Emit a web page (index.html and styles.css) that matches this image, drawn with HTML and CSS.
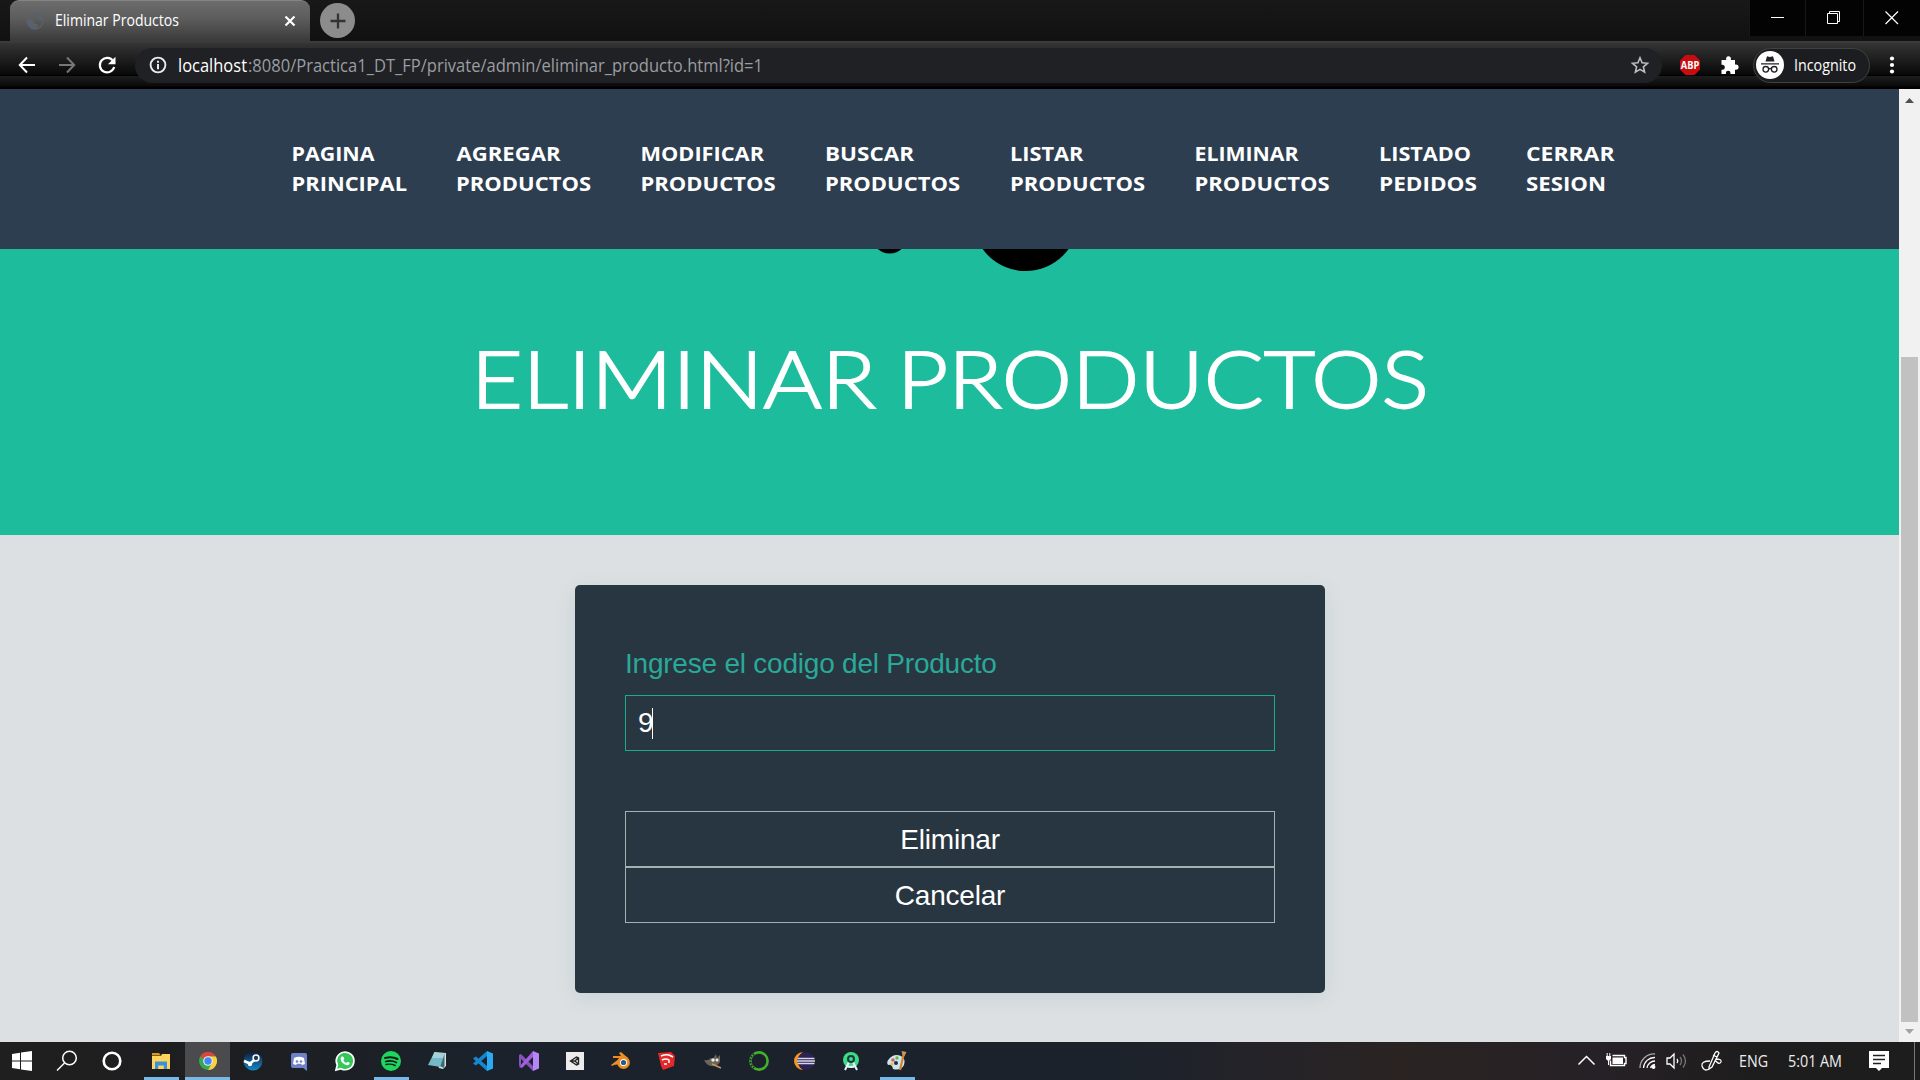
FILE: index.html
```html
<!DOCTYPE html>
<html lang="es">
<head>
<meta charset="utf-8">
<title>Eliminar Productos</title>
<link rel="stylesheet" href="styles.css">
</head>
<body>
<div class="tabstrip">
  <div class="tab">
    <svg class="globe" width="18" height="18" viewBox="0 0 18 18"><circle cx="9" cy="9" r="7.800" fill="none" stroke="#59616a" stroke-width="1.700"/><path d="M2 6c3 2 6 1 6 4s4 1 4 3-2 3.500-4 3.500C4 16 1 12 2 6zM10 1c-2 2-1 3 1 4s0 3 2 3 3 1 4-1c-1-4-4-6-7-6z" fill="#59616a"/></svg>
    <svg class="tab-title" width="130" height="24"><text x="0" y="17" textLength="124" lengthAdjust="spacingAndGlyphs">Eliminar Productos</text></svg>
    <svg class="tab-close" width="12" height="12" viewBox="0 0 12 12"><path d="M1.500 1.500l9 9M10.500 1.500l-9 9" stroke="#fff" stroke-width="2.200"/></svg>
  </div>
  <div class="new-tab"><svg width="16" height="16" viewBox="0 0 16 16"><path d="M8 .5v15M.5 8h15" stroke="#333" stroke-width="2.300"/></svg></div>
  <div class="window-buttons">
    <div class="wb"><svg width="14" height="14"><path d="M0 6.500h13" stroke="#fff"/></svg></div>
    <div class="wb"><svg width="14" height="14"><path d="M.5 2.500h10v10h-10zM2.500 2.500v-2h10v10h-2" fill="none" stroke="#fff"/></svg></div>
    <div class="wb"><svg width="14" height="14"><path d="M.5.5l12.500 12.500M13 .5l-12.500 12.500" stroke="#fff" stroke-width="1.200"/></svg></div>
  </div>
</div>
<div class="toolbar">
  <svg class="nav-icon" width="18" height="18" viewBox="0 0 18 18"><path d="M17 9H2M9 1.500L1.800 9 9 16.500" fill="none" stroke="#fff" stroke-width="2"/></svg>
  <svg class="nav-icon" width="18" height="18" viewBox="0 0 18 18"><path d="M1 9h15M9 1.500L16.200 9 9 16.500" fill="none" stroke="#777" stroke-width="2"/></svg>
  <svg class="nav-icon" width="18" height="18" viewBox="0 0 18 18"><path d="M15.200 5A7.300 7.300 0 1 0 16.200 11" fill="none" stroke="#fff" stroke-width="2.200"/><path d="M17.500.7v7.600H9.900z" fill="#fff"/></svg>
  <div class="omnibox">
    <svg width="18" height="18" viewBox="0 0 18 18"><circle cx="9" cy="9" r="7.400" fill="none" stroke="#e8eaed" stroke-width="1.900"/><path d="M9 8v5.200M9 4.700v2" stroke="#e8eaed" stroke-width="2"/></svg>
    <svg class="url" width="600" height="30"><text x="0" y="21.500" fill="#fff" textLength="69" lengthAdjust="spacingAndGlyphs">localhost</text><text x="70" y="21.500" fill="#9a9da1" textLength="515" lengthAdjust="spacingAndGlyphs">:8080/Practica1_DT_FP/private/admin/eliminar_producto.html?id=1</text></svg>
    <svg class="star" width="18" height="18" viewBox="0 0 18 18"><path d="M9 1.800l2.100 5 5.400.5-4.100 3.600 1.200 5.300L9 13.400l-4.600 2.800 1.200-5.300L1.500 7.300l5.400-.5z" fill="none" stroke="#bdbdbd" stroke-width="1.600"/></svg>
  </div>
  <svg class="abp" width="22" height="22" viewBox="0 0 22 22"><path d="M6.500 1h9L21 6.500v9L15.500 21h-9L1 15.500v-9z" fill="#c70d10"/><text x="1.800" y="14.700" textLength="18.500" lengthAdjust="spacingAndGlyphs">ABP</text></svg>
  <svg class="puzzle" width="20" height="20" viewBox="0 0 20 20"><path d="M1.500 5h4.800a2.500 2.500 0 1 1 4.400 0H15v4.500h1a2.600 2.600 0 0 1 0 5.200h-1V19h-4.500v-1a2.300 2.300 0 0 0-4.600 0v1H1.500v-4.300h.8a2.500 2.500 0 0 0 0-5h-.8z" fill="#fff"/></svg>
  <div class="incognito">
    <svg width="28" height="28" viewBox="0 0 28 28"><circle cx="14" cy="14" r="14" fill="#fff"/><path d="M9.500 10.500L11 5.300l3 .8 3-.8 1.500 5.200zM5 12.200h18v1.400H5z" fill="#202124"/><g fill="none" stroke="#202124" stroke-width="1.300"><circle cx="9.800" cy="18.300" r="2.800"/><circle cx="18.200" cy="18.300" r="2.800"/><path d="M12.600 18q1.400-1 2.800 0"/></g></svg>
    <svg class="inc-label" width="66" height="26"><text x="0" y="18.500" textLength="62" lengthAdjust="spacingAndGlyphs">Incognito</text></svg>
  </div>
  <svg class="dots" width="6" height="18" fill="#fff"><circle cx="3" cy="2.500" r="2.100"/><circle cx="3" cy="9" r="2.100"/><circle cx="3" cy="15.500" r="2.100"/></svg>
</div>
<div class="viewport">
  <main class="page">
    <nav class="menu">
      <svg width="115" height="60"><text x=".5" y="22" textLength="83" lengthAdjust="spacingAndGlyphs">PAGINA</text><text x=".5" y="52" textLength="115.500" lengthAdjust="spacingAndGlyphs">PRINCIPAL</text></svg>
      <svg width="134.500" height="60"><text x=".5" y="22" textLength="104" lengthAdjust="spacingAndGlyphs">AGREGAR</text><text x="0" y="52" textLength="135" lengthAdjust="spacingAndGlyphs">PRODUCTOS</text></svg>
      <svg width="134.500" height="60"><text x="-.5" y="22" textLength="123.500" lengthAdjust="spacingAndGlyphs">MODIFICAR</text><text x="-.5" y="52" textLength="135" lengthAdjust="spacingAndGlyphs">PRODUCTOS</text></svg>
      <svg width="134.500" height="60"><text x="0" y="22" textLength="89" lengthAdjust="spacingAndGlyphs">BUSCAR</text><text x="0" y="52" textLength="135" lengthAdjust="spacingAndGlyphs">PRODUCTOS</text></svg>
      <svg width="134.500" height="60"><text x="0" y="22" textLength="73.500" lengthAdjust="spacingAndGlyphs">LISTAR</text><text x="0" y="52" textLength="135" lengthAdjust="spacingAndGlyphs">PRODUCTOS</text></svg>
      <svg width="134.500" height="60"><text x=".5" y="22" textLength="104" lengthAdjust="spacingAndGlyphs">ELIMINAR</text><text x=".5" y="52" textLength="135" lengthAdjust="spacingAndGlyphs">PRODUCTOS</text></svg>
      <svg width="97" height="60"><text x="0" y="22" textLength="92" lengthAdjust="spacingAndGlyphs">LISTADO</text><text x="0" y="52" textLength="98" lengthAdjust="spacingAndGlyphs">PEDIDOS</text></svg>
      <svg width="90" height="60"><text x="0" y="22" textLength="88.500" lengthAdjust="spacingAndGlyphs">CERRAR</text><text x="0" y="52" textLength="80" lengthAdjust="spacingAndGlyphs">SESION</text></svg>
    </nav>
    <header class="hero">
      <svg class="logo" width="250" height="24" viewBox="850 249 250 24"><circle cx="889.700" cy="235.500" r="18"/><circle cx="1025.600" cy="218" r="53"/></svg>
      <svg class="title" width="960" height="80"><text x="-3" y="64.500" textLength="405" lengthAdjust="spacingAndGlyphs">ELIMINAR</text><text x="423" y="64.500" textLength="532" lengthAdjust="spacingAndGlyphs">PRODUCTOS</text></svg>
    </header>
    <section class="content">
      <form class="card">
        <label class="label">Ingrese el codigo del Producto</label>
        <div class="field">9<span class="caret"></span></div>
        <div class="btn">Eliminar</div>
        <div class="btn">Cancelar</div>
      </form>
    </section>
  </main>
  <div class="scrollbar">
    <svg width="21" height="21"><path d="M6 14l4.500-5 4.500 5z" fill="#505050"/></svg>
    <div class="thumb"></div>
    <svg width="21" height="20"><path d="M6 7h9l-4.500 5z" fill="#a3a3a3"/></svg>
  </div>
</div>
<footer class="taskbar">
  <div class="slot"><svg width="20" height="20" fill="#fff"><path d="M0 3l8-1.200V9.500H0zM9 1.600L20 0v9.500H9zM0 10.500h8v7.700L0 17zM9 10.500h11V20L9 18.400z"/></svg></div>
  <div class="slot"><svg width="22" height="22" fill="none" stroke="#fff" stroke-width="1.500"><circle cx="13.500" cy="8" r="6.800"/><path d="M8.500 13L1 20.500"/></svg></div>
  <div class="slot"><svg width="22" height="22"><circle cx="11" cy="11" r="8.300" fill="none" stroke="#fff" stroke-width="2.600"/></svg></div>
  <div class="slot open wide-gap"><svg width="20" height="20"><path d="M1 2h7l2 2.500h-9z" fill="#d99a15"/><path d="M1 5h9l1-2h8v15H1z" fill="#ffd35c"/><path d="M4 18v-7.500h12V18h-3.200v-3.500H7.200V18z" fill="#3793db"/></svg></div>
  <div class="slot open active"><svg width="20" height="20" viewBox="0 0 20 20"><circle cx="10" cy="10" r="9" fill="#35a853"/><path d="M10 10L2.200 5.500A9 9 0 0 1 17.800 5.500H10z" fill="#dc4437"/><path d="M10 5.500h7.800A9 9 0 0 1 10 19l4-6.500z" fill="#fecd40"/><circle cx="10" cy="10" r="4.800" fill="#eee"/><circle cx="10" cy="10" r="3.700" fill="#4285f4"/></svg></div>
  <div class="slot"><svg width="20" height="20"><defs><linearGradient id="st" x2="0" y2="1"><stop stop-color="#101b3b"/><stop offset="1" stop-color="#1688c3"/></linearGradient></defs><circle cx="10" cy="10" r="9.500" fill="url(#st)"/><path d="M1 10l6 2.500 5-4" stroke="#fff" stroke-width="2.800" fill="none"/><circle cx="13" cy="7" r="2.900" fill="#20385a" stroke="#fff" stroke-width="1.500"/><circle cx="7" cy="13" r="2.200" fill="#fff"/></svg></div>
  <div class="slot"><svg width="18" height="20"><rect x="1" y="2" width="16" height="15" rx="2" fill="#7181c7"/><path d="M12 16h5v4z" fill="#7181c7"/><path d="M4 7q5-2.500 10 0l1 6-3 1-1-1.300H7L6 14l-3-1z" fill="#fff"/><circle cx="7" cy="10.500" r="1.300" fill="#7181c7"/><circle cx="11" cy="10.500" r="1.300" fill="#7181c7"/></svg></div>
  <div class="slot"><svg width="20" height="20"><path d="M1 19l1.300-5A8.800 8.800 0 1 1 6 17.700z" fill="#35c759" stroke="#fff" stroke-width="1.700"/><path d="M6.500 5.500l2 .2.800 2.200-1 1.300q1 2 3 2.800l1.200-1.300 2.200 1q0 2.500-2.700 2.500Q6 12.700 5.500 7.500z" fill="#fff"/></svg></div>
  <div class="slot open"><svg width="20" height="20"><circle cx="10" cy="10" r="10" fill="#1ed760"/><g fill="none" stroke="#121e18" stroke-linecap="round"><path d="M4 7q7-2 12.500 1" stroke-width="2"/><path d="M4.700 10.500q6-1.500 10.700 1" stroke-width="1.700"/><path d="M5 13.500q5-1 9.200 1" stroke-width="1.400"/></g></svg></div>
  <div class="slot"><svg width="20" height="20"><path d="M7 1l12 1v13l-3 3-4-1z" fill="#d8e2df"/><path d="M7 2h11l-4 14L1 14z" fill="#75b8c6"/><path d="M7 2h11l-1.500 5L5 7z" fill="#a3d2da"/><path d="M17.500 3l-4 12 3 2 1-2z" fill="#3c6979"/></svg></div>
  <div class="slot"><svg width="20" height="20"><path d="M14 0l6 2.500v15L14 20z" fill="#2aaaf2"/><path d="M14 0v5L3 14.500 0 12.500z M0 7.500l3-2L14 15v5z" fill="#1687cf"/></svg></div>
  <div class="slot"><svg width="20" height="20"><path d="M0 4l2-1 12 12v5L2 8v6l-2 1z" fill="#8454bd"/><path d="M0 16L14 0v6L3 17z" fill="#a05edd"/><path d="M14 0l6 2.500v15L14 20z" fill="#b584f5"/></svg></div>
  <div class="slot"><svg width="18" height="18"><path d="M0 0h18v18H0z" fill="#ececec"/><path d="M4.500 9l6-4 2 1v6l-2 1zM4.500 9H9M9 9l3-3M9 9l3 3" fill="none" stroke="#222" stroke-width="1.400"/></svg></div>
  <div class="slot"><svg width="20" height="20"><path d="M0 14l9-7H2V5h8L8 2l2-1 7 6-8 6-6 1-2 1z" fill="#ee8d20"/><circle cx="12.500" cy="11.500" r="5" fill="#fff" stroke="#ee8d20" stroke-width="2.800"/><circle cx="12.500" cy="11.500" r="2.600" fill="#225b96"/></svg></div>
  <div class="slot"><svg width="20" height="20"><path d="M1 2l13-1 4 4-1 10-11 4-2-4z" fill="#e32929"/><path d="M4 5q5-2 8-1l4 2M5 9q4-2 7 0v3M7 13h3" fill="none" stroke="#fff" stroke-width="1.500"/></svg></div>
  <div class="slot"><svg width="20" height="20"><path d="M1 9q4 1 7-2l2 1 3-5 1 4 3-3v7q-3 5-8 4Q4 15 1 9z" fill="#6d655b"/><circle cx="10" cy="9" r="1.700" fill="#eee"/><circle cx="14" cy="9" r="1.500" fill="#eee"/><path d="M9 13l9 4" stroke="#c29760" stroke-width="1.600"/></svg></div>
  <div class="slot"><svg width="20" height="20"><circle cx="10" cy="10" r="8.600" fill="none" stroke="#43b02a" stroke-width="2.600"/><path d="M5 3A8.600 8.600 0 0 0 5 17" fill="none" stroke="#1c242e" stroke-width="2" stroke-dasharray="1.500 1.500"/></svg></div>
  <div class="slot"><svg width="20" height="20"><path d="M8 1a9 9 0 0 0 0 18A11 11 0 0 1 8 1z" fill="#f7941e"/><circle cx="11" cy="10" r="8.700" fill="#2c2255"/><path d="M2.500 7.500h17M2 10h18M2.500 12.500h17" stroke="#d9d7e5" stroke-width="1.500"/></svg></div>
  <div class="slot"><svg width="20" height="20"><circle cx="10" cy="9" r="8" fill="#3ddc84"/><path d="M9 9L4 19M11 9l5 10M6 15q4 2 8 0" stroke="#e7f3fa" stroke-width="2" fill="none"/><circle cx="10" cy="8" r="3" fill="#3ddc84" stroke="#173b42" stroke-width="2"/></svg></div>
  <div class="slot open"><svg width="22" height="22"><path d="M3 9q5-6 12-3 5 3 3 9-3 6-11 4-1-5-5-4-2-3 1-6z" fill="#cbe5f1"/><circle cx="7" cy="10" r="1.800" fill="#e7584c"/><circle cx="11" cy="8" r="1.700" fill="#69b83e"/><circle cx="6" cy="14" r="1.500" fill="#f2b72c"/><circle cx="10" cy="13" r="2" fill="#19324c"/><path d="M18 3l-4 17" stroke="#d9822b" stroke-width="2.200"/><path d="M15.500 1l5 1-2 4-2-1z" fill="#c8975b"/></svg></div>
  <div class="tray">
    <svg width="17" height="20" fill="none" stroke="#fff" stroke-width="1.500"><path d="M.5 13.500l8-8 8 8"/></svg>
    <svg class="battery" width="21" height="20"><path d="M6.500 4.500h12v2h1.500v6h-1.500v2h-14v-5" fill="none" stroke="#fff" stroke-width="1.400"/><path d="M6.500 6.500h10.500v6.500H6.500zM0 5h5v3L3.500 9.500h-2L0 8z" fill="#fff"/><path d="M1.200 2v3M3.800 2v3M2.500 9v5" stroke="#fff"/></svg>
    <svg class="wifi" width="18" height="20" fill="none" stroke="#fff" stroke-width="1.300"><path d="M1 17A14 14 0 0 1 16 3" stroke="#aaa"/><path d="M4.500 17A11 11 0 0 1 16 6.500M8 17a8 8 0 0 1 8-7M11.500 17q1-3 4.500-3.500"/><circle cx="14.500" cy="16" r="1.300" fill="#fff"/></svg>
    <svg class="speaker" width="22" height="20" fill="none" stroke="#fff" stroke-width="1.300"><path d="M1 7h3l4-4v14l-4-4H1zM11 8q1.500 2 0 4"/><path d="M14 6q3 4 0 8M17 3.500q5 6.500 0 13" stroke="#777"/></svg>
    <svg class="pen" width="22" height="22" fill="none" stroke="#fff" stroke-width="1.300"><path d="M8 17L14 3q2-3 4 0L11 17l-3 2zM12 5l4 2M9 11q-9 0-8 5 2 6 7 3M15 9q6 0 5 3-2 3-5-1"/></svg>
    <svg class="lang" width="30" height="22"><text x="0" y="17" textLength="29" lengthAdjust="spacingAndGlyphs">ENG</text></svg>
    <svg class="clock" width="55" height="22"><text x="0" y="17" textLength="54" lengthAdjust="spacingAndGlyphs">5:01 AM</text></svg>
    <svg class="notice" width="20" height="20"><path d="M0 0h20v17h-7l-3 3-3-3H0z" fill="#fff"/><path d="M4 4.500h12M4 8.500h12M4 12.500h8" stroke="#222" stroke-width="1.300"/></svg>
    <div class="peek"></div>
  </div>
</footer>
</body>
</html>
```
FILE: styles.css
```css
* { box-sizing: border-box; }
body {
  margin: 0;
  width: 1920px;
  height: 1080px;
  overflow: hidden;
  display: flex;
  flex-direction: column;
  background: #000;
  font-family: "Liberation Sans", Arial, sans-serif;
}
svg { display: block; flex: none; overflow: visible; }
.tabstrip { height: 41px; display: flex; background: linear-gradient(#181818, #111); flex: none; }
.tab {
  width: 300px;
  margin-left: 10px;
  padding: 0 14px 0 16px;
  display: flex;
  align-items: center;
  background: linear-gradient(#6c6c6c, #5c5c5c 45%, #3a3a3a);
  border-radius: 9px 9px 0 0;
  border-top: 1px solid #858585;
}
.tab text, .incognito text { font: 15.500px "Open Sans", "Noto Sans", sans-serif; fill: #fff; }
.tab-title { margin-left: 11px; }
.tab-close { margin-left: auto; }
.new-tab {
  width: 35px;
  height: 35px;
  margin: 3px 0 0 10px;
  border-radius: 50%;
  background: #8c8c8c;
  display: flex;
  align-items: center;
  justify-content: center;
}
.window-buttons { margin-left: auto; display: flex; height: 36px; }
.wb {
  width: 58px;
  display: flex;
  align-items: center;
  justify-content: center;
  background: #030303;
  border-left: 1px solid #181818;
}
.wb:first-child { width: 56px; }
.wb:nth-child(2) { padding-right: 2px; }
.wb:last-child { width: 57px; padding-right: 1px; }
.toolbar {
  height: 48px;
  flex: none;
  display: flex;
  align-items: center;
  padding: 0 22px 0 18px;
  background: linear-gradient(#3f3f3f 0, #333 3px, #080808 34px, #000 34px, #000 35px, #1d1d1d 35px, #0a0a0a 45px, #000 46px);
}
.nav-icon { margin-right: 22px; }
.omnibox {
  width: 1527px;
  height: 35px;
  border-radius: 18px;
  background: #202124;
  display: flex;
  align-items: center;
  padding: 0 13px 0 14px;
  margin-left: -3px;
}
.url { margin-left: 11px; }
.url text { font: 18.500px "Open Sans", "Noto Sans", sans-serif; }
.star { margin-left: auto; }
.abp { margin-left: 17px; }
.abp text { font: bold 10px "Open Sans", sans-serif; fill: #fff; }
.puzzle { margin-left: 19px; }
.incognito {
  width: 117px;
  height: 35px;
  margin-left: 13px;
  border: 1px solid #414141;
  border-radius: 18px;
  background: #1c1d20;
  display: flex;
  align-items: center;
  padding-left: 2px;
}
.inc-label { margin-left: 10px; }
.dots { margin-left: 19px; }
.viewport { height: 953px; flex: none; display: flex; }
.page { width: 1899px; height: 953px; background: #dce0e3; overflow: hidden; }
.menu {
  height: 160px;
  padding: 50px 0 0 291px;
  display: flex;
  gap: 50px;
  background: #2d3e50;
}
.menu text {
  font: bold 19.500px "Open Sans", sans-serif;
  fill: #fff;
}
.hero {
  height: 286px;
  background: #1cbc9c;
  display: flex;
  flex-direction: column;
}
.logo { margin-left: 850px; overflow: hidden; }
.title { margin: 70px 0 0 474px; }
.title text {
  font: 300 78px Lato, sans-serif;
  fill: #fff;
  stroke: #fff;
  stroke-width: 1.800px;
}
.content { padding-top: 50px; }
.card {
  width: 750px;
  height: 408px;
  margin: 0 auto 0 575px;
  padding: 60px 50px 0;
  border-radius: 5px;
  background: #283641;
  box-shadow: 0 5px 22px rgba(19, 90, 75, .09);
}
.label {
  display: block;
  height: 50px;
  line-height: 37px;
  font-size: 28px;
  letter-spacing: -.22px;
  color: #2aa998;
}
.field {
  height: 56px;
  display: flex;
  align-items: center;
  padding-left: 12px;
  margin-bottom: 60px;
  border: 1px solid #1bad88;
  color: #fff;
  font-size: 28px;
}
.caret { width: 1px; height: 31px; background: #fff; margin-left: -2px; }
.btn {
  height: 56px;
  border: 1px solid #a0b3b0;
  color: #fff;
  font-size: 28px;
  letter-spacing: -.2px;
  line-height: 55px;
  text-align: center;
}
.scrollbar { width: 21px; background: #f1f1f1; }
.thumb { width: 17px; height: 665px; margin: 247px 0 0 2px; background: #c1c1c1; }
.taskbar {
  height: 38px;
  flex: none;
  display: flex;
  background: linear-gradient(90deg, #201f1f 0, #1d1e21 230px, #1b222b 480px, #1b222b 1100px, #242329 1250px, #2a2322 1400px, #262126 1600px, #1e1d1d 1750px);
}
.slot {
  width: 46px;
  display: flex;
  align-items: center;
  justify-content: center;
  position: relative;
}
.slot:nth-child(-n+3) { width: 45px; }
.slot:first-child { width: 44px; }
.wide-gap { margin-left: 4px; }
.open::after {
  content: "";
  position: absolute;
  bottom: 0;
  left: 6px;
  width: 35px;
  height: 3px;
  background: #76b9ed;
}
.slot.active { background: #4b4b4d; width: 45px; margin: 0 0 0 1px; }
.active::after { left: 0; width: 45px; }
.tray { margin-left: auto; display: flex; align-items: center; }
.tray text { font: 16px "Open Sans", sans-serif; fill: #eee; }
.battery { margin-left: 11px; }
.wifi { margin-left: 12px; }
.speaker { margin-left: 9px; }
.pen { margin-left: 13px; }
.lang { margin-left: 16px; }
.clock { margin-left: 19px; }
.notice { margin-left: 26px; }
.peek { width: 6px; height: 38px; margin-left: 25px; border-left: 1px solid #777; }
```
